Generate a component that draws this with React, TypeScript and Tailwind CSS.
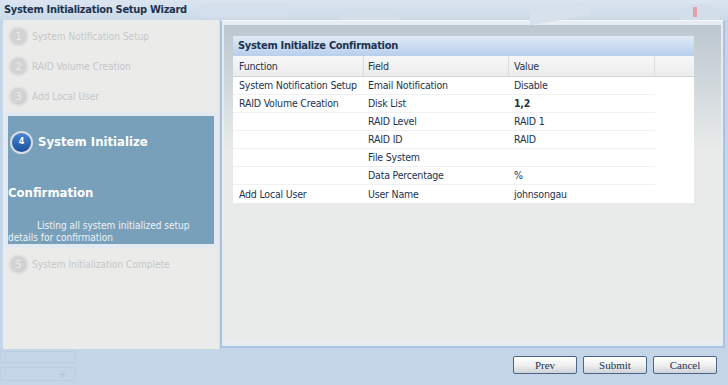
import React from "react";

const rows: { f: string; field: string; v: string; bold?: boolean }[] = [
  { f: "System Notification Setup", field: "Email Notification", v: "Disable" },
  { f: "RAID Volume Creation", field: "Disk List", v: "1,2", bold: true },
  { f: "", field: "RAID Level", v: "RAID 1" },
  { f: "", field: "RAID ID", v: "RAID" },
  { f: "", field: "File System", v: "" },
  { f: "", field: "Data Percentage", v: "%" },
  { f: "Add Local User", field: "User Name", v: "johnsongau" },
];

function Step({ n, label }: { n: number; label: string }) {
  return (
    <div className="flex items-center h-[30px] pl-[5px]">
      <div className="w-[21px] h-[21px] rounded-full bg-[#d3d3d3] border-2 border-[#e2e2e2] flex items-center justify-center text-[10px] text-[#ececec]">
        {n}
      </div>
      <span className="ml-[3px] text-[10px] text-[#c6c6c6] whitespace-nowrap">{label}</span>
    </div>
  );
}

export default function App() {
  return (
    <div
      className="w-[728px] h-[385px] bg-[#c4d5e7] overflow-hidden relative flex flex-col"
      style={{ fontFamily: '"DejaVu Sans Condensed", "DejaVu Sans", Tahoma, sans-serif' }}
    >
      {/* title bar */}
      <div className="h-[20px] shrink-0 bg-gradient-to-b from-[#dbe5f0] to-[#cbd9e8] relative flex items-center pl-[4px]">
        <div className="absolute left-[200px] top-[2px] w-[90px] h-[16px] bg-[#d4e0ec] rounded-sm opacity-70" />
        <div className="absolute left-[340px] top-[8px] w-[60px] h-[12px] rounded-t-full bg-[#d2dfeb]" />
        <div className="absolute left-[530px] top-[6px] w-[60px] h-[14px] bg-[#d6e1ec] skew-y-[-10deg]" />
        <div className="absolute left-[680px] top-[4px] w-[40px] h-[16px] rounded-t-full bg-[#d2deea]" />
        <div className="absolute left-[693px] top-[7px] w-[4px] h-[10px] bg-[#e2a0a8]" />
        <span className="relative text-[11px] font-bold text-[#1c3350] tracking-[-0.3px] whitespace-nowrap">
          System Initialization Setup Wizard
        </span>
      </div>

      <div className="flex h-[329px] shrink-0 pl-[3px]">
        {/* left panel */}
        <div className="w-[217px] h-[329px] bg-[#ebecea] border-r border-[#d7dde3] pt-[1px]">
          <Step n={1} label="System Notification Setup" />
          <Step n={2} label="RAID Volume Creation" />
          <Step n={3} label="Add Local User" />
          <div className="mx-[1px] mt-[1px] p-[4px] bg-[#e2e9f1] rounded-sm">
            <div className="bg-[#79a0bb] h-[128px] text-white flex flex-col">
              <div className="flex items-center h-[30px] pl-[2px] mt-[11px]">
                <div className="w-[23px] h-[23px] rounded-full border-2 border-[#d9dde2] bg-gradient-to-b from-[#4b86cf] to-[#1b4f9e] flex items-center justify-center text-[9px] font-bold text-white">
                  4
                </div>
                <span className="ml-[5px] text-[13px] font-bold whitespace-nowrap">System Initialize</span>
              </div>
              <div className="mt-[27px] text-[13px] font-bold leading-[18px]">Confirmation</div>
              <div className="mt-[18px] text-[10px] leading-[12px] text-[#eef2f6]">
                <span className="pl-[29px]">Listing all system initialized setup</span>
                <br />
                details for confirmation
              </div>
            </div>
          </div>
          <div className="mt-[1px]">
            <Step n={5} label="System Initialization Complete" />
          </div>
        </div>

        {/* right panel */}
        <div className="w-[505px] h-[328px] border-x-2 border-t border-b-2 border-[#a9c3e2] border-t-[#f4f7fb] bg-[#e6ecf2] p-[2px] pt-[4px]">
          <div className="h-full bg-gradient-to-b from-[#bcc7d0] via-[#e9ebea] via-40% to-[#e9ebea] pl-[9px] pt-[11px] border-b-4 border-[#e9ecf0]">
            <div className="w-[461px] bg-white">
              <div className="h-[20px] bg-gradient-to-b from-[#dfeaf6] to-[#b8cfec] flex items-center pl-[5px] text-[11px] font-bold text-[#1c3350] tracking-[-0.3px]">
                System Initialize Confirmation
              </div>
              <div className="grid grid-cols-[131px_145px_146px_39px] h-[21px] bg-gradient-to-b from-[#f7f7f7] to-[#ececec] border-b border-[#d4d4d4] text-[10.5px] text-[#1c3350] tracking-[-0.2px]">
                <div className="pl-[6px] pt-[1px] flex items-center border-r border-[#dcdcdc]">Function</div>
                <div className="pl-[4px] pt-[1px] flex items-center border-r border-[#dcdcdc]">Field</div>
                <div className="pl-[5px] pt-[1px] flex items-center border-r border-[#dcdcdc]">Value</div>
                <div />
              </div>
              {rows.map((r, i) => (
                <div
                  key={i}
                  className="grid grid-cols-[131px_145px_146px_39px] h-[18px] text-[10.5px] text-[#1c3350] tracking-[-0.2px] whitespace-nowrap"
                >
                  <div className={`pl-[6px] pt-[1px] flex items-center ${i < 6 ? "border-b border-[#f1f1f1]" : ""}`}>{r.f}</div>
                  <div className={`pl-[4px] pt-[1px] flex items-center ${i < 6 ? "border-b border-[#f1f1f1]" : ""}`}>{r.field}</div>
                  <div className={`pl-[5px] pt-[1px] flex items-center ${i < 6 ? "border-b border-[#f1f1f1]" : ""} ${r.bold ? "font-bold" : ""}`}>{r.v}</div>
                  <div />
                </div>
              ))}
            </div>
          </div>
        </div>
      </div>

      {/* footer */}
      <div className="flex-1 relative flex items-start justify-end pr-[11px] pt-[7px] gap-[6px]">
        <div className="absolute left-0 top-[2px] w-[75px] h-[12px] border border-[#bccee0]" />
        <div className="absolute left-0 top-[18px] w-[75px] h-[14px] border border-[#bccee0] flex items-center justify-end pr-[8px] text-[10px] text-[#adc1d5]">+</div>
        {["Prev", "Submit", "Cancel"].map((b) => (
          <button
            key={b}
            className="w-[64px] h-[18px] rounded-[2px] border border-[#4a6585] bg-gradient-to-b from-[#ffffff] via-[#f0f0f0] to-[#cfd3d8] text-[11px] text-[#1c3350] leading-none"
            style={{ fontFamily: '"Liberation Serif", "Times New Roman", serif' }}
          >
            {b}
          </button>
        ))}
      </div>
    </div>
  );
}
